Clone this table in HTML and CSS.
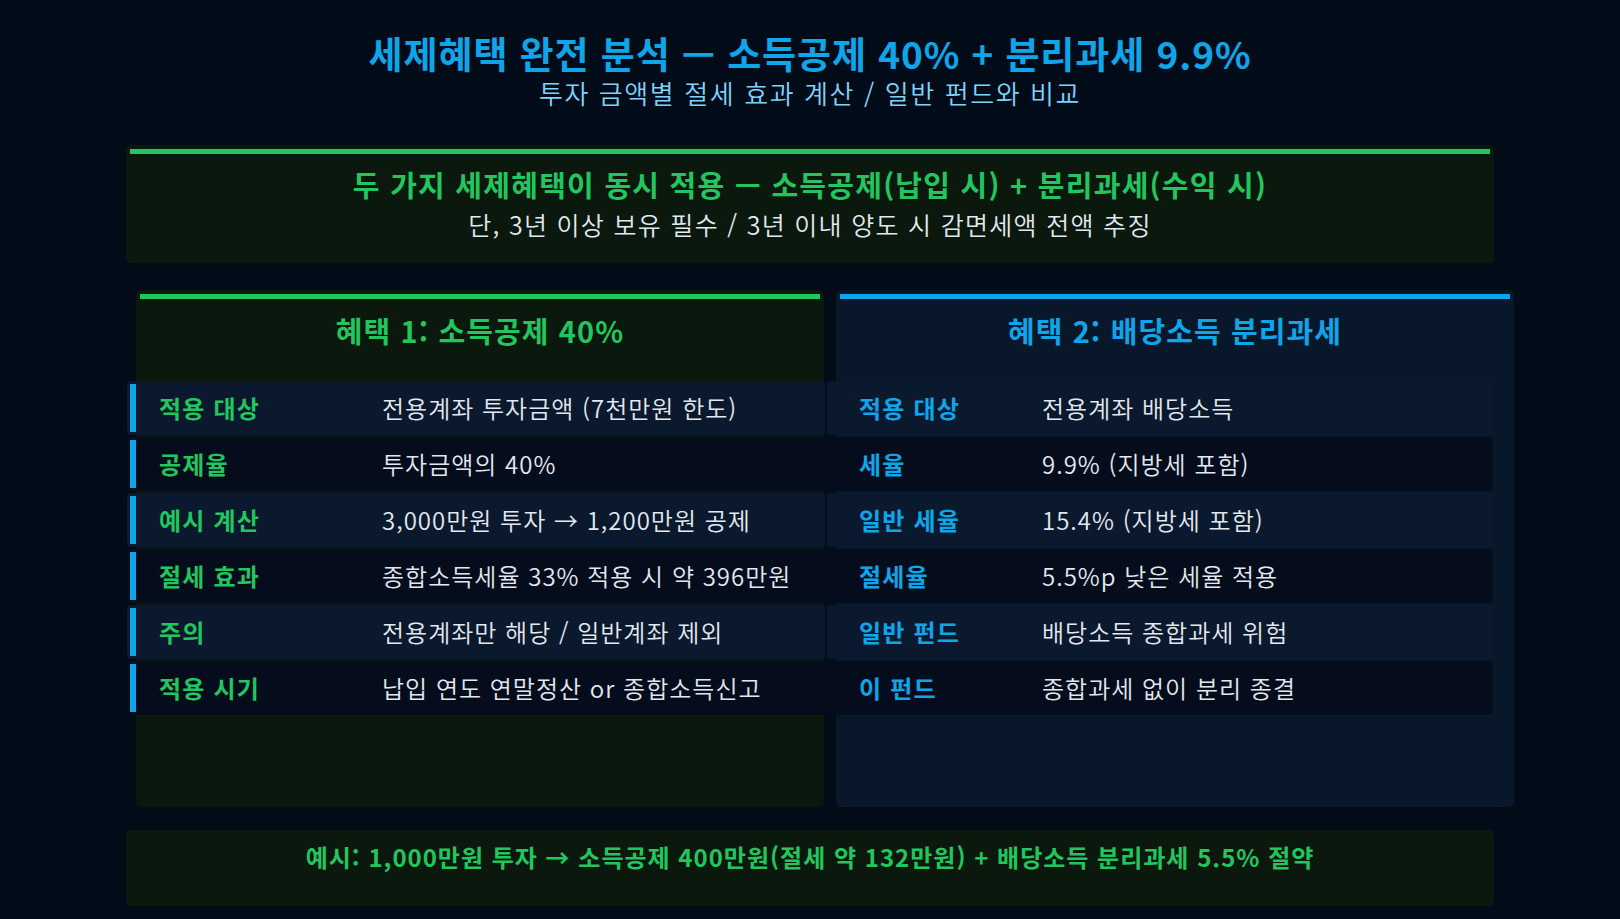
FILE: index.html
```html
<!DOCTYPE html>
<html lang="ko">
<head>
<meta charset="utf-8">
<title>세제혜택 완전 분석</title>
<link rel="stylesheet" href="styles.css">
</head>
<body>
<div class="page">
  <header class="hero">
    <h1 class="title">세제혜택 완전 분석 — 소득공제 40% + 분리과세 9.9%</h1>
    <p class="subtitle">투자 금액별 절세 효과 계산 / 일반 펀드와 비교</p>
  </header>

  <section class="banner">
    <div class="banner-inner">
      <h2 class="banner-title">두 가지 세제혜택이 동시 적용 — 소득공제(납입 시) + 분리과세(수익 시)</h2>
      <p class="banner-sub">단, 3년 이상 보유 필수 / 3년 이내 양도 시 감면세액 전액 추징</p>
    </div>
  </section>

  <section class="cards">
    <article class="card card-green">
      <div class="card-bar"></div>
      <h3 class="card-title">혜택 1: 소득공제 40%</h3>
      <div class="rows rows-left">
        <div class="row light"><div class="row-in"><span class="lbl">적용 대상</span><span class="val">전용계좌 투자금액 (7천만원 한도)</span></div></div>
        <div class="row dark"><div class="row-in"><span class="lbl">공제율</span><span class="val">투자금액의 40%</span></div></div>
        <div class="row light"><div class="row-in"><span class="lbl">예시 계산</span><span class="val">3,000만원 투자 → 1,200만원 공제</span></div></div>
        <div class="row dark"><div class="row-in"><span class="lbl">절세 효과</span><span class="val">종합소득세율 33% 적용 시 약 396만원</span></div></div>
        <div class="row light"><div class="row-in"><span class="lbl">주의</span><span class="val">전용계좌만 해당 / 일반계좌 제외</span></div></div>
        <div class="row dark"><div class="row-in"><span class="lbl">적용 시기</span><span class="val">납입 연도 연말정산 or 종합소득신고</span></div></div>
      </div>
    </article>

    <article class="card card-blue">
      <div class="card-bar"></div>
      <h3 class="card-title">혜택 2: 배당소득 분리과세</h3>
      <div class="rows rows-right">
        <div class="row light"><div class="row-in"><span class="lbl">적용 대상</span><span class="val">전용계좌 배당소득</span></div></div>
        <div class="row dark"><div class="row-in"><span class="lbl">세율</span><span class="val">9.9% (지방세 포함)</span></div></div>
        <div class="row light"><div class="row-in"><span class="lbl">일반 세율</span><span class="val">15.4% (지방세 포함)</span></div></div>
        <div class="row dark"><div class="row-in"><span class="lbl">절세율</span><span class="val">5.5%p 낮은 세율 적용</span></div></div>
        <div class="row light"><div class="row-in"><span class="lbl">일반 펀드</span><span class="val">배당소득 종합과세 위험</span></div></div>
        <div class="row dark"><div class="row-in"><span class="lbl">이 펀드</span><span class="val">종합과세 없이 분리 종결</span></div></div>
      </div>
    </article>
  </section>

  <footer class="summary">
    <p class="summary-text">예시: 1,000만원 투자 → 소득공제 400만원(절세 약 132만원) + 배당소득 분리과세 5.5% 절약</p>
  </footer>
</div>
</body>
</html>
```

FILE: styles.css
```css
* { box-sizing: border-box; margin: 0; padding: 0; }

html, body {
  width: 1620px;
  height: 919px;
  background: #020b18;
  overflow: hidden;
}

body {
  font-family: "Noto Sans CJK KR", "Noto Sans", sans-serif;
  color: #e2e8f0;
}

.page {
  width: 1368px;
  margin: 0 auto;
  padding-top: 31px;
}

.hero { text-align: center; }

.title {
  font-size: 37px;
  line-height: 44px;
  font-weight: 700;
  letter-spacing: 0.9px;
  color: #0ea5e9;
}

.subtitle {
  margin-top: 3px;
  font-size: 26px;
  line-height: 30px;
  font-weight: 350;
  letter-spacing: 1.6px;
  color: #7dd3fc;
}

.banner {
  margin-top: 37px;
  height: 118px;
  padding: 4px;
  background: #0a180d;
  border-radius: 4px;
  text-align: center;
}

.banner-inner {
  border-top: 5px solid #22c55e;
  padding-top: 12px;
}

.banner-title {
  font-size: 29px;
  line-height: 36px;
  font-weight: 700;
  letter-spacing: 1.25px;
  color: #22c55e;
}

.banner-sub {
  margin-top: 6px;
  font-size: 25px;
  line-height: 32px;
  font-weight: 350;
  letter-spacing: 1.3px;
  color: #e2e8f0;
}

.cards {
  margin-top: 27px;
  margin-left: 10px;
  width: 1378px;
  display: grid;
  grid-template-columns: 688px 678px;
  column-gap: 12px;
}

.card {
  height: 517px;
  padding: 4px;
  border-radius: 5px;
}

.card-green { background: #0a180d; }
.card-blue { background: #081729; }

.card-bar { height: 5px; }
.card-green .card-bar { background: #22c55e; }
.card-blue .card-bar { background: #0ea5e9; }

.card-title {
  text-align: center;
  font-size: 29px;
  line-height: 36px;
  font-weight: 700;
  letter-spacing: 1.1px;
  padding: 13px 0 33px;
}
.card-green .card-title { color: #22c55e; }
.card-blue .card-title { color: #0ea5e9; }

.rows {
  margin-left: -13px;
  display: flex;
  flex-direction: column;
  gap: 2px;
}
.rows-left { width: 698px; }
.rows-right { width: 666px; }

.row {
  height: 54px;
  padding: 3px;
  border-radius: 4px;
}
.row.light { background: #0a192d; }
.row.dark { background: #050d1c; }

.row-in {
  height: 48px;
  display: grid;
  align-items: center;
  font-size: 24px;
  line-height: 32px;
}

.rows-left .row-in {
  border-left: 6px solid #0ea5e9;
  padding-left: 23px;
  grid-template-columns: 223px 1fr;
}

.rows-right .row-in {
  padding-left: 29px;
  grid-template-columns: 183px 1fr;
}

.lbl { font-weight: 700; white-space: nowrap; letter-spacing: 1.2px; }
.rows-left .lbl { color: #22c55e; }
.rows-right .lbl { color: #0ea5e9; }

.val { color: #e2e8f0; white-space: nowrap; font-weight: 350; letter-spacing: 1px; }

.summary {
  margin-top: 23px;
  height: 76px;
  background: #0a180d;
  border-radius: 4px;
  padding-top: 11px;
  text-align: center;
}

.summary-text {
  font-size: 24px;
  line-height: 32px;
  font-weight: 700;
  letter-spacing: 1px;
  color: #22c55e;
}
```
